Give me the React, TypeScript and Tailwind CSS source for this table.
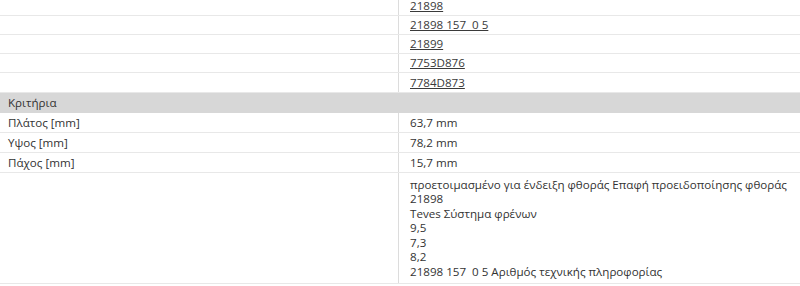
import React from "react";

const links = ["21898", "21898 157  0 5", "21899", "7753D876", "7784D873"];

const specs = [
  { label: "Πλάτος [mm]", value: "63,7 mm" },
  { label: "Υψος [mm]", value: "78,2 mm" },
  { label: "Πάχος [mm]", value: "15,7 mm" },
];

const notes = [
  "προετοιμασμένο για ένδειξη φθοράς Επαφή προειδοποίησης φθοράς",
  "21898",
  "Teves Σύστημα φρένων",
  "9,5",
  "7,3",
  "8,2",
  "21898 157  0 5 Αριθμός τεχνικής πληροφορίας",
];

function Row({ left, children, h = "h-[19px]" }: { left?: string; children: React.ReactNode; h?: string }) {
  return (
    <div className={`flex border-b border-[#e8e8e8] ${h}`}>
      <div className="w-[399px] shrink-0 border-r border-[#dcdcdc] pl-2 flex items-center">{left}</div>
      <div className="flex-1 pl-[11px] flex items-center">{children}</div>
    </div>
  );
}

export default function App() {
  return (
    <div
      className="w-[800px] h-[286px] overflow-hidden bg-white text-[11.6px] text-[#333]"
      style={{ fontFamily: '"Open Sans", "Noto Sans", sans-serif' }}
    >
      <div className="-mt-[3px]">
        {links.map((l, i) => (
          <Row key={l} h={i === links.length - 1 ? "h-[20px]" : "h-[19px]"}>
            <span className="underline text-[#3a3a3a] whitespace-pre">{l}</span>
          </Row>
        ))}
        <div className="h-[20px] bg-[#d7d7d7] pl-2 flex items-center">Κριτήρια</div>
        {specs.map((s) => (
          <Row key={s.label} left={s.label} h="h-[20px]">
            {s.value}
          </Row>
        ))}
        <div className="flex border-b border-[#e8e8e8]">
          <div className="w-[399px] shrink-0 border-r border-[#dcdcdc]" />
          <div className="flex-1 pl-[11px] pt-[4.5px] pb-[3.5px] leading-[14.5px]">
            {notes.map((n, i) => (
              <div key={i} className="whitespace-pre">{n}</div>
            ))}
          </div>
        </div>
      </div>
    </div>
  );
}
